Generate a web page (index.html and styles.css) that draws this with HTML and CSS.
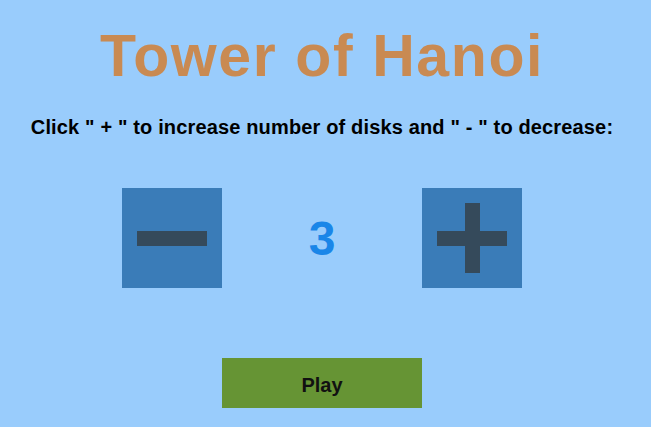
FILE: index.html
```html
<!DOCTYPE html>
<html>
<head>
<meta charset="utf-8">
<link rel="stylesheet" href="styles.css">
</head>
<body>
<div class="page">
  <h1 class="title">Tower of Hanoi</h1>
  <p class="hint">Click " + " to increase number of disks and " - " to decrease:</p>
  <div class="controls">
    <button class="btn minus" aria-label="decrease"><span class="bar-h"></span></button>
    <div class="count">3</div>
    <button class="btn plus" aria-label="increase"><span class="bar-h"></span><span class="bar-v"></span></button>
  </div>
  <button class="play">Play</button>
</div>
</body>
</html>
```
FILE: styles.css
```css
html, body {
  margin: 0;
  padding: 0;
  background: #99ccfc;
  height: 100%;
}
.page {
  width: 644px;
  display: flex;
  flex-direction: column;
  align-items: center;
  font-family: "Liberation Sans", Arial, sans-serif;
}
.title {
  margin: 24px 0 0 0;
  font-size: 59px;
  line-height: 64px;
  font-weight: bold;
  letter-spacing: 1.6px;
  color: #c98a52;
}
.hint {
  margin: 27px 0 0 0;
  font-size: 20px;
  line-height: 24px;
  font-weight: bold;
  letter-spacing: 0.15px;
  color: #000;
}
.controls {
  margin-top: 49px;
  display: flex;
  align-items: center;
}
.btn {
  width: 100px;
  height: 100px;
  border: none;
  padding: 0;
  background: #3a7cb8;
  position: relative;
}
.bar-h {
  position: absolute;
  left: 15px;
  top: 43px;
  width: 70px;
  height: 15px;
  background: #354a5b;
}
.bar-v {
  position: absolute;
  left: 43px;
  top: 15px;
  width: 15px;
  height: 70px;
  background: #354a5b;
}
.count {
  width: 200px;
  text-align: center;
  font-size: 48px;
  line-height: 56px;
  padding-top: 2px;
  font-weight: bold;
  color: #1a86e8;
}
.play {
  margin-top: 70px;
  width: 200px;
  height: 50px;
  border: none;
  padding: 4px 0 0 0;
  background: #669434;
  font-family: "Liberation Sans", Arial, sans-serif;
  font-size: 20px;
  font-weight: bold;
  color: #111;
}
```
